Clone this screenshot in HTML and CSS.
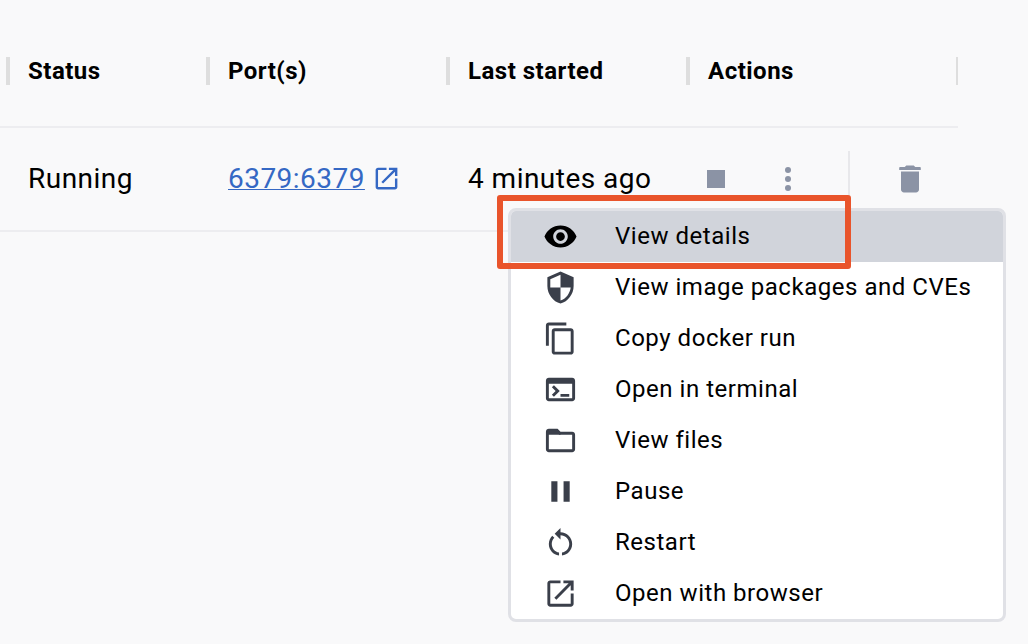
FILE: index.html
```html
<!DOCTYPE html>
<html lang="en">
<head>
<meta charset="utf-8">
<title>Containers</title>
<link rel="stylesheet" href="styles.css">
</head>
<body>
<main class="table">
  <div class="row head">
    <div class="cell">Status</div>
    <div class="cell">Port(s)</div>
    <div class="cell">Last started</div>
    <div class="cell last">Actions</div>
  </div>
  <div class="row body">
    <div class="data">Running</div>
    <div class="data"><a class="port" href="#">6379:6379</a><svg class="port-icon" viewBox="0 0 24 24"><path d="M19 19H5V5h7V3H5c-1.11 0-2 .9-2 2v14c0 1.1.89 2 2 2h14c1.1 0 2-.9 2-2v-7h-2v7zM14 3v2h3.59l-9.83 9.83 1.41 1.41L19 6.41V10h2V3h-7z"/></svg></div>
    <div class="data">4 minutes ago</div>
    <div class="actions">
      <svg class="act" viewBox="0 0 24 24"><path d="M6 6h12v12H6z"/></svg>
      <svg class="act" viewBox="0 0 24 24"><circle cx="12" cy="6" r="2"/><circle cx="12" cy="12" r="2"/><circle cx="12" cy="18" r="2"/></svg>
      <span class="divider"></span>
      <svg class="act" viewBox="0 0 24 24"><path d="M6 19c0 1.1.9 2 2 2h8c1.1 0 2-.9 2-2V7H6v12zM18.6 4h-3.1l-.7-.7c-.2-.2-.4-.3-.7-.3H9.9c-.3 0-.5.1-.7.3l-.7.7H5.4c-.4 0-.6.2-.6.5V6h14.400V4.500c0-.3-.2-.5-.6-.5z"/></svg>
    </div>
  </div>
</main>

<ul class="menu">
  <li class="item active"><svg viewBox="0 0 24 24"><path d="M12 4.500C7 4.500 2.730 7.610 1 12c1.730 4.390 6 7.500 11 7.500s9.270-3.110 11-7.500c-1.730-4.390-6-7.500-11-7.500zM12 17c-2.760 0-5-2.240-5-5s2.240-5 5-5 5 2.240 5 5-2.240 5-5 5zm0-8c-1.660 0-3 1.340-3 3s1.340 3 3 3 3-1.340 3-3-1.340-3-3-3z"/></svg><span>View details</span></li>
  <li class="item"><svg viewBox="0 0 24 24"><path d="M12 1 3 5v6c0 5.550 3.840 10.740 9 12 5.160-1.260 9-6.450 9-12V5l-9-4zm0 10.990h7c-.530 4.120-3.280 7.790-7 8.940V12H5V6.300l7-3.110v8.800z"/></svg><span>View image packages and CVEs</span></li>
  <li class="item"><svg viewBox="0 0 24 24"><path d="M16 1H4c-1.100 0-2 .9-2 2v14h2V3h12V1zm3 4H8c-1.100 0-2 .9-2 2v14c0 1.100.9 2 2 2h11c1.100 0 2-.9 2-2V7c0-1.100-.9-2-2-2zm0 16H8V7h11v14z"/></svg><span>Copy docker run</span></li>
  <li class="item"><svg viewBox="0 0 24 24"><path d="M20 4H4c-1.110 0-2 .9-2 2v12c0 1.100.89 2 2 2h16c1.100 0 2-.9 2-2V6c0-1.100-.89-2-2-2zm0 14H4V8h16v10zm-2-1h-6v-2h6v2zM7.500 17l-1.410-1.410L8.670 13l-2.590-2.590L7.500 9l4 4-4 4z"/></svg><span>Open in terminal</span></li>
  <li class="item"><svg viewBox="0 0 24 24"><path d="M9.170 6l2 2H20v10H4V6h5.170M10 4H4c-1.100 0-1.990.9-1.990 2L2 18c0 1.100.9 2 2 2h16c1.100 0 2-.9 2-2V8c0-1.100-.9-2-2-2h-8l-2-2z"/><path d="M3 5h7l2 2v1H3z"/></svg><span>View files</span></li>
  <li class="item"><svg viewBox="0 0 24 24"><path d="M5.700 5h4.200v14H5.700zM14.100 5h4.200v14h-4.200z"/></svg><span>Pause</span></li>
  <li class="item"><svg viewBox="0 0 24 24"><path d="M12 5V2L8 6l4 4V7c3.310 0 6 2.690 6 6 0 2.970-2.170 5.430-5 5.910v2.020c3.950-.490 7-3.850 7-7.930 0-4.420-3.580-8-8-8zm-6 8c0-1.650.670-3.150 1.760-4.240L6.340 7.340C4.900 8.790 4 10.790 4 13c0 4.080 3.050 7.440 7 7.930v-2.020c-2.830-.480-5-2.940-5-5.910z"/></svg><span>Restart</span></li>
  <li class="item"><svg viewBox="0 0 24 24"><path d="M19 19H5V5h7V3H5c-1.110 0-2 .9-2 2v14c0 1.100.890 2 2 2h14c1.100 0 2-.9 2-2v-7h-2v7zM14 3v2h3.590l-9.830 9.830 1.410 1.410L19 6.410V10h2V3h-7z"/></svg><span>Open with browser</span></li>
</ul>
<div class="highlight"></div>
</body>
</html>
```
FILE: styles.css
```css
* { box-sizing: border-box; }
body {
  margin: 0;
  width: 1028px;
  height: 644px;
  overflow: hidden;
  position: relative;
  background: #f9f9fa;
  color: #000;
  font-family: Roboto, "Liberation Sans", sans-serif;
}
svg { display: block; flex: none; fill: currentColor; }
.table { width: 958px; }
.row {
  display: grid;
  grid-template-columns: 200px 240px 240px 272px;
  padding-left: 6px;
  border-bottom: 2px solid #ededf0;
}
.head { height: 128px; padding-top: 57px; }
.cell {
  height: 28px;
  padding-left: 18px;
  border-left: 4px solid #dedede;
  font-size: 24px;
  font-weight: 700;
  line-height: 28px;
  letter-spacing: 0.5px;
}
.cell.last { border-right: 2px solid #dedede; }
.body { height: 104px; }
.data {
  display: flex;
  align-items: center;
  padding-left: 22px;
  font-size: 28px;
  letter-spacing: 0.47px;
  line-height: 34px;
  white-space: nowrap;
}
.port {
  color: #3568c4;
  text-decoration: underline;
  text-decoration-thickness: 1px;
  text-underline-offset: 1px;
}
.port-icon { width: 29px; height: 29px; margin: 0 0 1px 7px; color: #3568c4; }
.actions {
  display: flex;
  align-items: center;
  padding-left: 12px;
  color: #8b93a5;
}
.act { width: 36px; height: 36px; }
.act + .act { margin-left: 36px; }
.divider { width: 2px; height: 56px; margin: 0 42px; background: #e8e8eb; }
.menu {
  position: absolute;
  left: 508px;
  top: 208px;
  width: 498px;
  margin: 0;
  padding: 0;
  list-style: none;
  background: #fff;
  border: 3px solid #e0e1e6;
  border-radius: 8px;
  overflow: hidden;
}
.item {
  display: flex;
  align-items: center;
  gap: 37px;
  height: 51px;
  padding-left: 32px;
  font-size: 24px;
  letter-spacing: 0.53px;
  line-height: 28px;
  white-space: nowrap;
}
.item span { padding-bottom: 2px; }
.item svg { width: 35px; height: 35px; color: #3a3f4a; }
.active { background: #d1d4db; }
.active svg { color: #000; }
.highlight {
  position: absolute;
  left: 497px;
  top: 195px;
  width: 354px;
  height: 74px;
  border: 6px solid #e9542b;
  border-radius: 3px;
}
```
